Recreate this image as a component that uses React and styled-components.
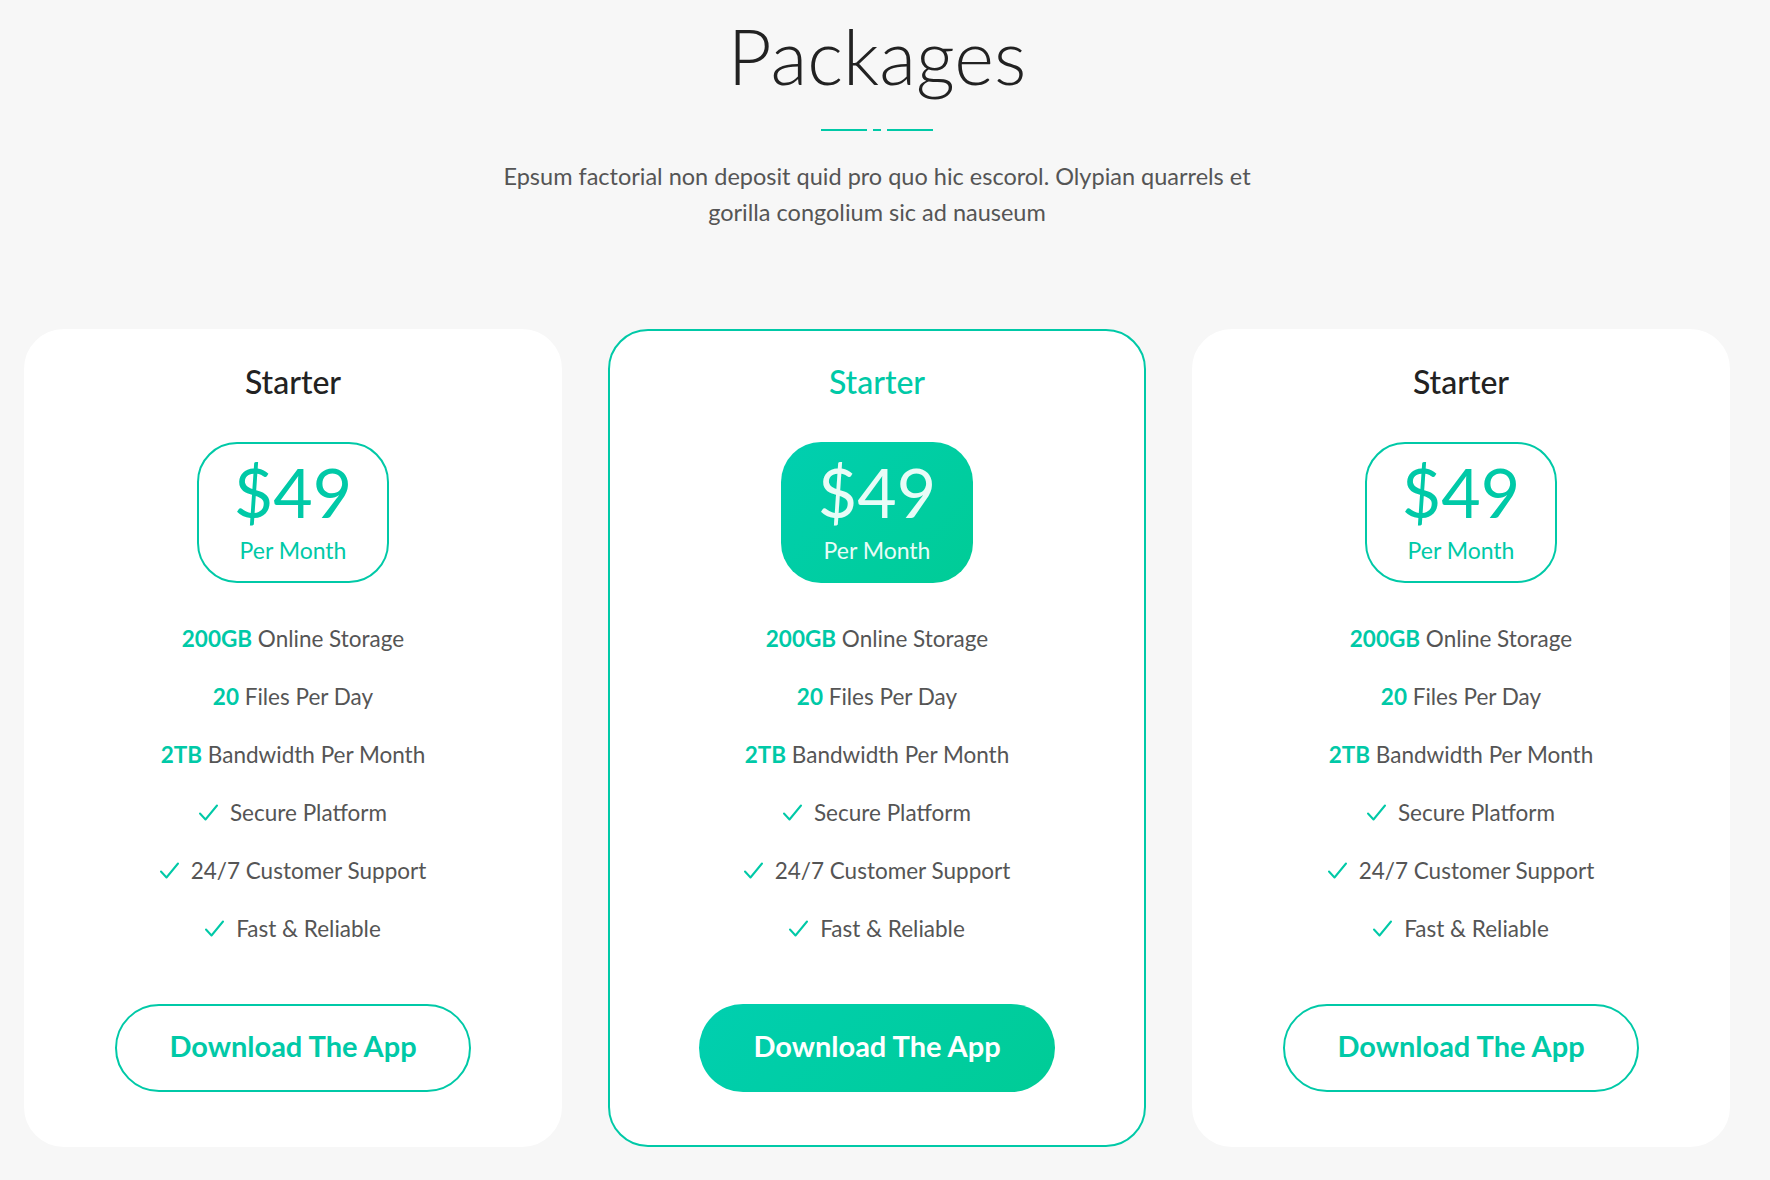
import React from "react";
import styled, { createGlobalStyle, css } from "styled-components";

const GlobalStyle = createGlobalStyle`
  * {
    box-sizing: border-box;
  }
  body {
    margin: 0;
    background: #f7f7f7;
    font-family: "Lato", "Open Sans", sans-serif;
  }
`;

const TEAL = "#00c9a7";
const GRADIENT = "linear-gradient(135deg, #00cfb0 0%, #00cc96 100%)";

const Page = styled.div`
  min-height: 100vh;
  padding: 0 40px 32px 24px;
  background: #f7f7f7;
`;

const Header = styled.header`
  display: flex;
  flex-direction: column;
  align-items: center;
  text-align: center;
`;

const Title = styled.h1`
  margin: 18px 0 0;
  font-size: 76px;
  line-height: 1;
  font-weight: 300;
  color: #222;
`;

const Divider = styled.div`
  display: flex;
  gap: 6px;
  margin-top: 35px;
`;

const Dash = styled.span`
  display: block;
  width: ${(p) => (p.$short ? "8px" : "46px")};
  height: 2px;
  background: ${TEAL};
`;

const Subtitle = styled.p`
  margin: 27px 0 0;
  max-width: 800px;
  font-size: 23.5px;
  line-height: 36px;
  color: #555;
`;

const Grid = styled.div`
  display: grid;
  grid-template-columns: repeat(3, 538px);
  gap: 46px;
  margin-top: 99px;
`;

const Card = styled.div`
  display: flex;
  flex-direction: column;
  align-items: center;
  padding: 31px 0 53px;
  background: #fff;
  border-radius: 40px;
  border: 2px solid ${(p) => (p.$featured ? TEAL : "#fff")};
`;

const PlanName = styled.h3`
  margin: 0;
  font-size: 32px;
  line-height: 40px;
  font-weight: 500;
  color: ${(p) => (p.$featured ? TEAL : "#222")};
`;

const PriceBox = styled.div`
  display: flex;
  flex-direction: column;
  align-items: center;
  width: 192px;
  height: 141px;
  margin-top: 40px;
  padding-top: 14px;
  border-radius: 40px;
  border: 2px solid ${TEAL};
  ${(p) =>
    p.$featured
      ? css`
          border-color: transparent;
          background: ${GRADIENT} border-box;
          color: #e8fcf7;
        `
      : css`
          color: ${TEAL};
        `}
`;

const Amount = styled.div`
  font-size: 68px;
  line-height: 68px;
  font-weight: 400;
`;

const Period = styled.div`
  margin-top: 10px;
  font-size: 23px;
  line-height: 28px;
`;

const Features = styled.ul`
  list-style: none;
  margin: 26px 0 0;
  padding: 0;
  text-align: center;
`;

const Feature = styled.li`
  display: flex;
  align-items: center;
  justify-content: center;
  gap: 12px;
  height: 58px;
  font-size: 22.5px;
  color: #555;

  b {
    font-weight: 700;
    color: ${TEAL};
  }
`;

const Check = styled.svg`
  width: 19px;
  height: 17px;
  flex: none;
`;

const Button = styled.button`
  width: 356px;
  height: 88px;
  margin-top: 47px;
  padding: 0 0 5px;
  border-radius: 44px;
  font-family: inherit;
  font-size: 29px;
  font-weight: 700;
  cursor: pointer;
  ${(p) =>
    p.$featured
      ? css`
          border: none;
          background: ${GRADIENT};
          color: #fff;
        `
      : css`
          border: 2px solid ${TEAL};
          background: #fff;
          color: ${TEAL};
        `}
`;

const CheckIcon = () => (
  <Check viewBox="0 0 19 17" fill="none">
    <polyline
      points="1,9.5 6.5,15.5 18,1.5"
      stroke={TEAL}
      strokeWidth="2"
      strokeLinecap="round"
      strokeLinejoin="round"
    />
  </Check>
);

const plans = [{ featured: false }, { featured: true }, { featured: false }];

const PlanCard = ({ featured }) => (
  <Card $featured={featured}>
    <PlanName $featured={featured}>Starter</PlanName>
    <PriceBox $featured={featured}>
      <Amount>$49</Amount>
      <Period>Per Month</Period>
    </PriceBox>
    <Features>
      <Feature>
        <span>
          <b>200GB</b> Online Storage
        </span>
      </Feature>
      <Feature>
        <span>
          <b>20</b> Files Per Day
        </span>
      </Feature>
      <Feature>
        <span>
          <b>2TB</b> Bandwidth Per Month
        </span>
      </Feature>
      <Feature>
        <CheckIcon />
        Secure Platform
      </Feature>
      <Feature>
        <CheckIcon />
        24/7 Customer Support
      </Feature>
      <Feature>
        <CheckIcon />
        Fast &amp; Reliable
      </Feature>
    </Features>
    <Button $featured={featured}>Download The App</Button>
  </Card>
);

const App = () => (
  <Page>
    <GlobalStyle />
    <Header>
      <Title>Packages</Title>
      <Divider>
        <Dash />
        <Dash $short />
        <Dash />
      </Divider>
      <Subtitle>
        Epsum factorial non deposit quid pro quo hic escorol. Olypian quarrels
        et gorilla congolium sic ad nauseum
      </Subtitle>
    </Header>
    <Grid>
      {plans.map((plan, i) => (
        <PlanCard key={i} featured={plan.featured} />
      ))}
    </Grid>
  </Page>
);

export default App;
